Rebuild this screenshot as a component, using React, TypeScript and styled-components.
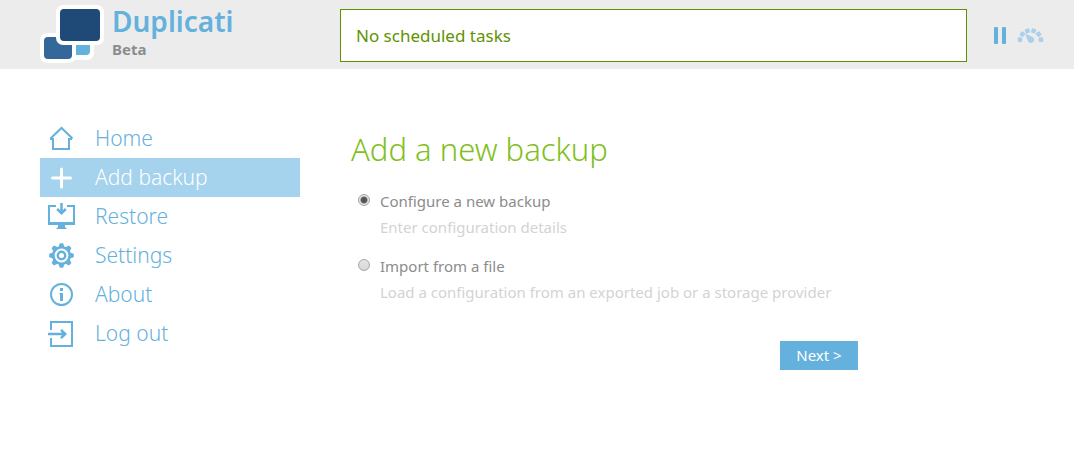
import React, { useState } from "react";
import styled, { createGlobalStyle } from "styled-components";

const blue = "#65b1dd";
const paleBlue = "#a5d2ec";
const green = "#7fc01e";
const darkGreen = "#5f9200";

const GlobalStyle = createGlobalStyle`
  * { box-sizing: border-box; }
  body {
    margin: 0;
    background: #fff;
    color: #8c8c8c;
    font-family: "Noto Sans", "Open Sans", sans-serif;
    font-size: 15px;
  }
`;

const Header = styled.header`
  display: flex;
  align-items: flex-start;
  background: #ececec;
  padding: 4px 30px 5px 40px;
`;

const Brand = styled.a`
  display: flex;
  gap: 8px;
  flex: 0 0 300px;
  text-decoration: none;
`;

const BrandText = styled.div`
  display: flex;
  flex-direction: column;
`;

const BrandName = styled.span`
  color: ${blue};
  font-size: 28px;
  line-height: 34px;
  font-weight: 600;
`;

const Channel = styled.span`
  color: #8c8c8c;
  font-size: 15px;
  line-height: 22px;
  font-weight: 700;
`;

const Status = styled.div`
  flex: 1;
  margin-top: 5px;
  padding: 14px 15px;
  border: 1px solid ${darkGreen};
  background: #fff;
  color: ${darkGreen};
  font-size: 17px;
  line-height: 23px;
`;

const Controls = styled.div`
  display: flex;
  align-items: center;
  gap: 11px;
  margin: 23px 0 0 27px;
`;

const IconButton = styled.button`
  display: flex;
  padding: 0;
  border: 0;
  background: none;
  cursor: pointer;
`;

const Page = styled.div`
  display: flex;
  padding: 50px 40px 40px;
`;

const Menu = styled.nav`
  display: flex;
  flex-direction: column;
  flex: 0 0 260px;
`;

const MenuLink = styled.a<{ $active?: boolean }>`
  display: flex;
  align-items: center;
  gap: 20px;
  height: 39px;
  padding: 0 7px 1px;
  background: ${(p) => (p.$active ? paleBlue : "transparent")};
  color: ${(p) => (p.$active ? "#fff" : blue)};
  font-size: 21px;
  line-height: 28px;
  font-weight: 300;
  text-decoration: none;

  svg {
    flex: none;
  }
`;

const Main = styled.main`
  flex: 1;
  max-width: 518px;
  margin: 9px 0 0 51px;
`;

const Title = styled.h1`
  margin: 0 0 18px;
  color: ${green};
  font-size: 31px;
  line-height: 42px;
  font-weight: 300;
`;

const Option = styled.div`
  display: grid;
  grid-template-columns: 12px 1fr;
  column-gap: 10px;
  margin: 0 0 13px;
  padding-left: 7px;
  line-height: 26px;
`;

const Radio = styled.input`
  appearance: none;
  width: 12px;
  height: 12px;
  margin: 6px 0 0;
  border: 1px solid #a6a6a6;
  border-radius: 50%;
  background: linear-gradient(#e4e4e4, #d8d8d8);

  &:checked {
    background: radial-gradient(circle, #555 0 2px, #666 3px, #e4e4e4 4px);
  }
`;

const Hint = styled.span`
  grid-column: 2;
  color: #d3d3d3;
`;

const Actions = styled.div`
  display: flex;
  justify-content: flex-end;
  margin: 36px 11px 0 0;
`;

const NextButton = styled.button`
  width: 78px;
  height: 29px;
  padding: 0 0 2px;
  border: 0;
  background: ${blue};
  color: #fff;
  font: inherit;
  cursor: pointer;
`;

const Logo = () => (
  <svg width="64" height="60" viewBox="0 0 64 60">
    <rect x="26" y="28" width="28" height="28" rx="7" fill="#fff" />
    <rect x="30" y="32" width="20" height="19" rx="4" fill={blue} />
    <rect x="0" y="29" width="36" height="30" rx="7" fill="#fff" />
    <rect x="4" y="33" width="28" height="22" rx="4" fill="#34679a" />
    <rect x="16" y="1" width="48" height="40" rx="7" fill="#fff" />
    <rect x="20" y="5" width="40" height="32" rx="4" fill="#1f4976" />
  </svg>
);

const PauseIcon = () => (
  <svg width="12" height="18" viewBox="0 0 12 18" fill={blue}>
    <rect width="4" height="17" rx="1" />
    <rect x="8" width="4" height="17" rx="1" />
  </svg>
);

const GaugeIcon = () => (
  <svg width="27" height="16" viewBox="0 0 27 16">
    <g fill="#a9d0e8">
      {[-83, -50, -17, 17, 50, 83].map((a) => (
        <rect key={a} x="11.2" y="0.2" width="4.6" height="4.4" rx="0.8" transform={`rotate(${a} 13.5 13)`} />
      ))}
      <path d="M8.2 5.8 15.6 9a3.2 3.2 0 1 1-4.8 3.4Z" />
    </g>
  </svg>
);

const HomeIcon = () => (
  <svg width="28" height="28" viewBox="0 0 28 28" fill="none" stroke={blue} strokeWidth="2">
    <path d="M6 14v11h16V14" />
    <path d="M3 15h3M22 15h3M3.5 14.5 14.5 4l11 10.5" />
  </svg>
);

const PlusIcon = () => (
  <svg width="28" height="28" viewBox="0 0 28 28" fill="none" stroke="#fff" strokeWidth="3" strokeLinecap="round">
    <path d="M14.5 6v18M5.5 15h18" />
  </svg>
);

const RestoreIcon = () => (
  <svg width="28" height="28" viewBox="0 0 28 28" fill="none" stroke={blue} strokeWidth="2">
    <path d="M9 4H2v17h25V4h-7" />
    <path d="M14.5 1v10M10.2 7l4.3 4.3L18.8 7" strokeWidth="2.5" />
    <path d="M1 20h27v3H18v2l2 2H9l2-2v-2H1z" fill={blue} stroke="none" />
  </svg>
);

const GearIcon = () => (
  <svg width="28" height="28" viewBox="0 0 28 28" fill="none" stroke={blue}>
    <circle cx="14.5" cy="14.5" r="8.2" strokeWidth="2.6" />
    <circle cx="14.5" cy="14.5" r="3.7" strokeWidth="2.4" />
    {[0, 45, 90, 135, 180, 225, 270, 315].map((a) => (
      <path key={a} d="M12.8 2.2h3.4l1.4 4.2h-6.2z" fill={blue} stroke="none" transform={`rotate(${a} 14.5 14.5)`} />
    ))}
  </svg>
);

const InfoIcon = () => (
  <svg width="28" height="28" viewBox="0 0 28 28" fill="none" stroke={blue}>
    <circle cx="14.5" cy="14.5" r="10.5" strokeWidth="2" />
    <path d="M13 8h3v3h-3zM12.5 13H16v8h-3v-6.5h-.5z" fill={blue} stroke="none" />
  </svg>
);

const LogoutIcon = () => (
  <svg width="28" height="28" viewBox="0 0 28 28" fill="none" stroke={blue} strokeWidth="2">
    <path d="M4 11V3h21v24H4v-8" />
    <path d="M1 15h17M14 10.8l4.2 4.2-4.2 4.2" strokeWidth="2.6" />
  </svg>
);

const menu = [
  { label: "Home", Icon: HomeIcon },
  { label: "Add backup", Icon: PlusIcon, active: true },
  { label: "Restore", Icon: RestoreIcon },
  { label: "Settings", Icon: GearIcon },
  { label: "About", Icon: InfoIcon },
  { label: "Log out", Icon: LogoutIcon },
];

const choices = [
  { id: "new", label: "Configure a new backup", hint: "Enter configuration details" },
  { id: "import", label: "Import from a file", hint: "Load a configuration from an exported job or a storage provider" },
];

export default function App() {
  const [choice, setChoice] = useState("new");
  return (
    <>
      <GlobalStyle />
      <Header>
        <Brand href="#">
          <Logo />
          <BrandText>
            <BrandName>Duplicati</BrandName>
            <Channel>Beta</Channel>
          </BrandText>
        </Brand>
        <Status>No scheduled tasks</Status>
        <Controls>
          <IconButton aria-label="Pause">
            <PauseIcon />
          </IconButton>
          <IconButton aria-label="Throttle">
            <GaugeIcon />
          </IconButton>
        </Controls>
      </Header>
      <Page>
        <Menu>
          {menu.map(({ label, Icon, active }) => (
            <MenuLink key={label} href="#" $active={active}>
              <Icon />
              {label}
            </MenuLink>
          ))}
        </Menu>
        <Main>
          <Title>Add a new backup</Title>
          {choices.map((c) => (
            <Option key={c.id}>
              <Radio
                type="radio"
                name="source"
                id={c.id}
                checked={choice === c.id}
                onChange={() => setChoice(c.id)}
              />
              <label htmlFor={c.id}>{c.label}</label>
              <Hint>{c.hint}</Hint>
            </Option>
          ))}
          <Actions>
            <NextButton>Next &gt;</NextButton>
          </Actions>
        </Main>
      </Page>
    </>
  );
}
